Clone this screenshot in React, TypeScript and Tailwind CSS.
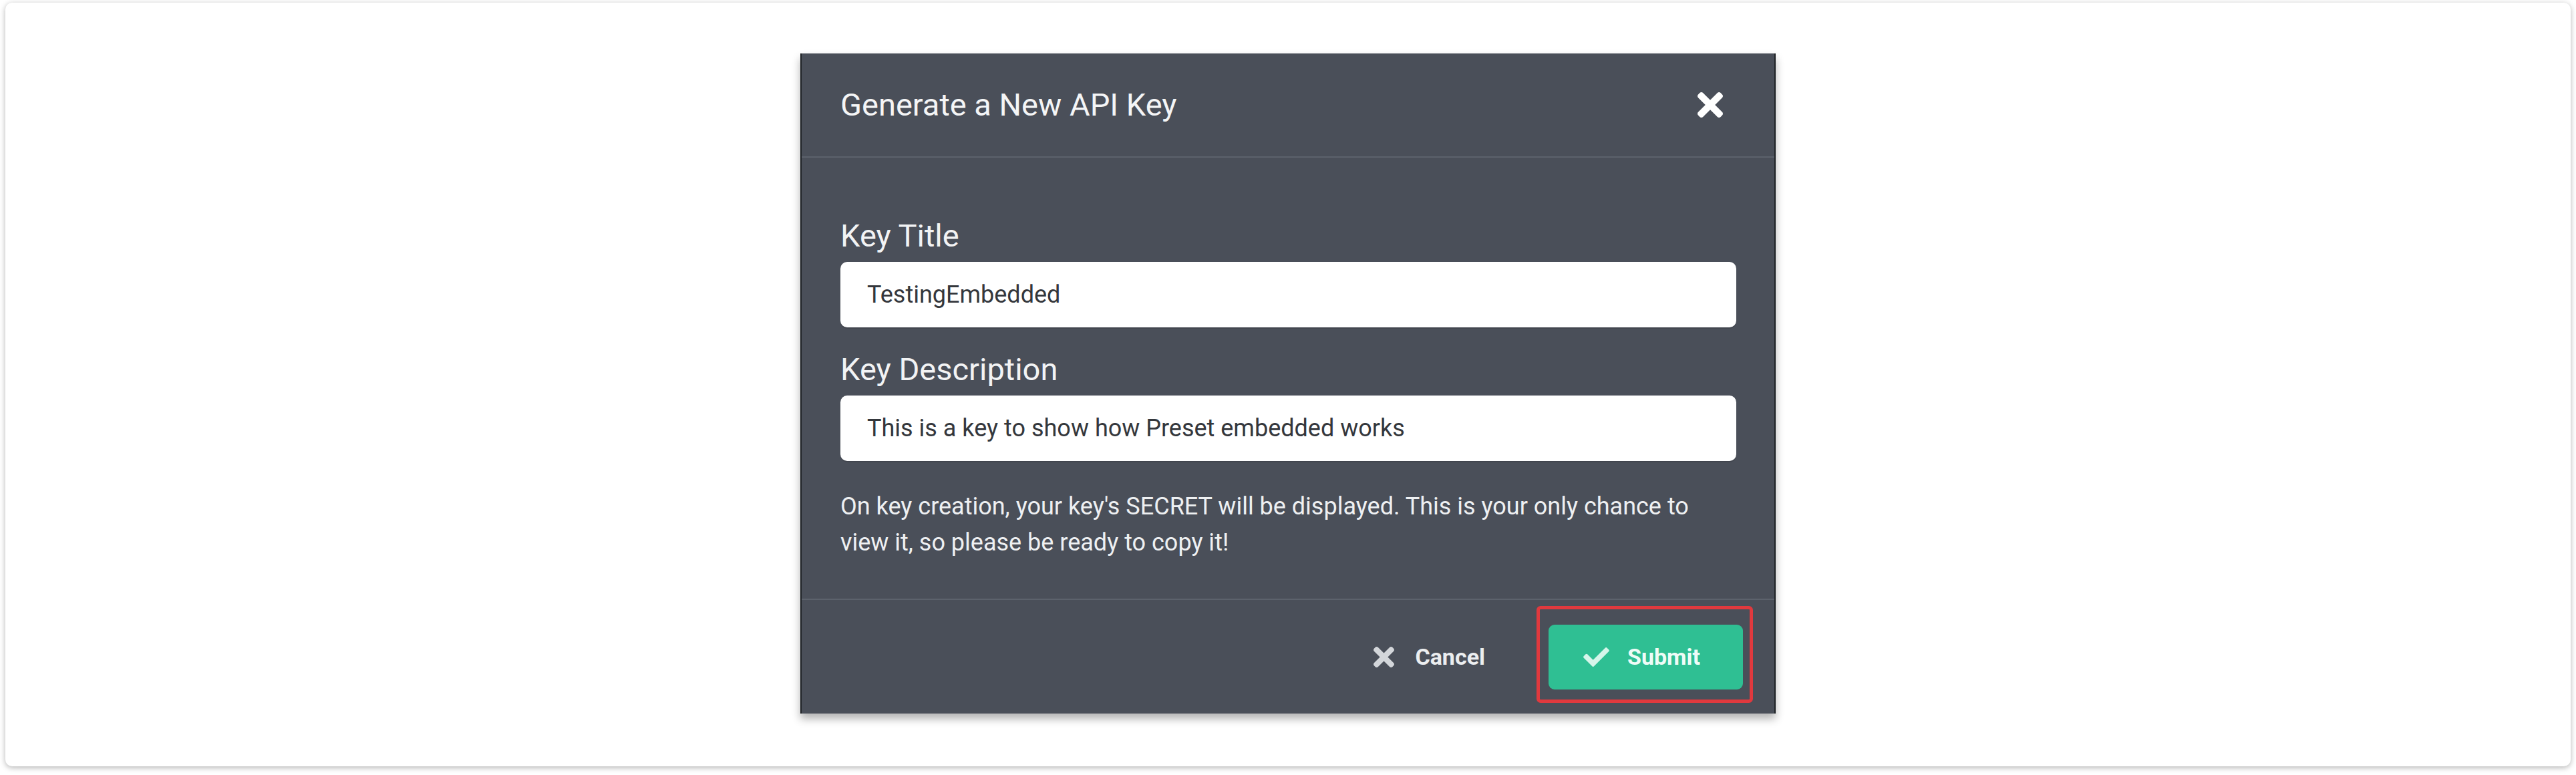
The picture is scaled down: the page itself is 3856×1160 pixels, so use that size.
import React from 'react'

const TIMES_PATH =
  'M242.72 256l100.07-100.07c12.28-12.28 12.28-32.19 0-44.48l-22.24-22.24c-12.28-12.28-32.19-12.28-44.48 0L176 189.28 75.93 89.21c-12.28-12.28-32.19-12.28-44.48 0L9.21 111.45c-12.28 12.28-12.28 32.19 0 44.48L109.28 256 9.21 356.07c-12.28 12.28-12.28 32.19 0 44.48l22.24 22.24c12.28 12.28 32.2 12.28 44.48 0L176 322.72l100.07 100.07c12.28 12.28 32.2 12.28 44.48 0l22.24-22.24c12.28-12.28 12.28-32.19 0-44.48L242.72 256z'

const CHECK_PATH =
  'M173.898 439.404l-166.4-166.4c-9.997-9.997-9.997-26.206 0-36.204l36.203-36.204c9.997-9.998 26.207-9.998 36.204 0L192 312.69 432.095 72.596c9.997-9.997 26.207-9.997 36.204 0l36.203 36.204c9.997 9.997 9.997 26.206 0 36.204l-294.4 294.401c-9.998 9.997-26.207 9.997-36.204-.001z'

function TimesIcon({ className }: { className?: string }) {
  return (
    <svg viewBox="0 80 352 352" className={className} fill="currentColor">
      <path d={TIMES_PATH} />
    </svg>
  )
}

function CheckIcon({ className }: { className?: string }) {
  return (
    <svg viewBox="0 64 512 384" className={className} fill="currentColor">
      <path d={CHECK_PATH} />
    </svg>
  )
}

export default function App() {
  return (
    <div className="min-h-screen bg-white px-[8px] pt-[4px] pb-[12px] font-['Roboto','Noto_Sans',sans-serif]">
      <div className="flex justify-center rounded-[10px] bg-white pt-[76px] pb-[79px] shadow-[0_2px_8px_rgba(0,0,0,0.3)]">
        {/* modal */}
        <div className="w-[1460px] border-x-2 border-[#1f2226] bg-[#4a4f59] shadow-[0_8px_12px_rgba(0,0,0,0.3)]">
          {/* header */}
          <div className="flex h-[156px] items-center justify-between border-b-2 border-[#5c626c] pl-[58px] pr-[77px]">
            <h2 className="text-[47px] leading-[56px] font-normal text-[#f4f5f6]">
              Generate a New API Key
            </h2>
            <button className="text-white">
              <TimesIcon className="h-[38px] w-[38px]" />
            </button>
          </div>

          {/* body */}
          <div className="pl-[58px] pr-[57px] pt-[90px] pb-[57px]">
            <label className="block text-[47px] leading-[54px] text-[#f2f3f4]">Key Title</label>
            <div className="mt-[12px] flex h-[98px] items-center rounded-[10px] bg-white pl-[40px] shadow-[0_2px_0_rgba(0,0,0,0.12)]">
              <span className="text-[36px] text-[#34373c]">TestingEmbedded</span>
            </div>

            <label className="mt-[36px] block text-[47px] leading-[54px] text-[#f2f3f4]">
              Key Description
            </label>
            <div className="mt-[12px] flex h-[98px] items-center rounded-[10px] bg-white pl-[40px] shadow-[0_2px_0_rgba(0,0,0,0.12)]">
              <span className="text-[36px] text-[#34373c]">
                This is a key to show how Preset embedded works
              </span>
            </div>

            <p className="mt-[41px] text-[36px] leading-[54px] text-[#eef0f2]">
              On key creation, your key's SECRET will be displayed. This is your only chance to
              <br />
              view it, so please be ready to copy it!
            </p>
          </div>

          {/* footer */}
          <div className="flex h-[172px] items-center justify-end border-t-2 border-[#5c626c] pr-[47px]">
            <button className="mr-[95px] flex items-center text-[#eceef0]">
              <TimesIcon className="h-[31px] w-[31px] text-[#d3d6da]" />
              <span className="ml-[31px] text-[34px] font-bold">Cancel</span>
            </button>
            <div className="relative">
              <button className="flex h-[97px] w-[291px] items-center rounded-[9px] bg-[#2fbf93] pl-[52px] text-[#effcf7]">
                <CheckIcon className="h-[29px] w-[39px] text-[#d6f5ea]" />
                <span className="ml-[27px] text-[34px] font-bold">Submit</span>
              </button>
              <div className="pointer-events-none absolute -left-[18px] -right-[15px] -top-[28px] -bottom-[20px] rounded-[6px] border-[5px] border-[#e0393e]" />
            </div>
          </div>
        </div>
      </div>
    </div>
  )
}
